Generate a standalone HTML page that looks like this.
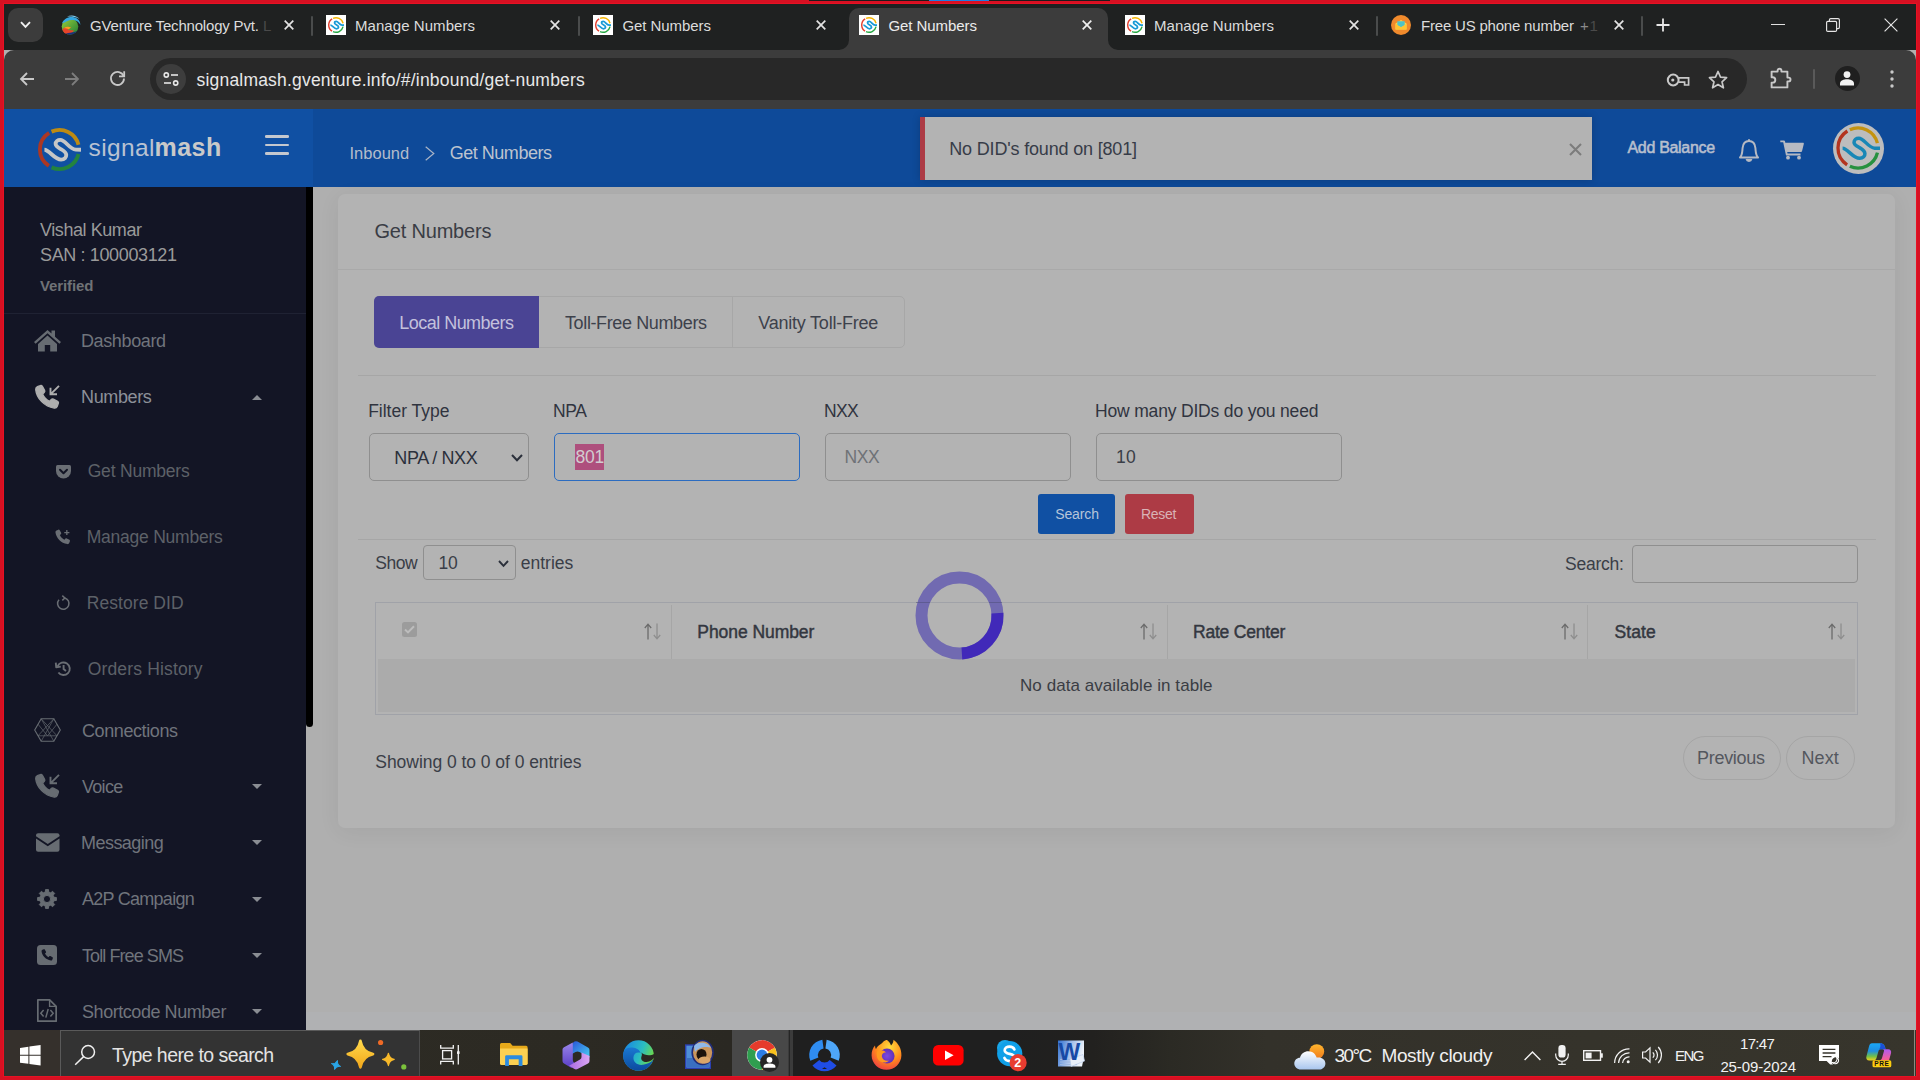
<!DOCTYPE html>
<html lang="en">
<head>
<meta charset="utf-8">
<title>Get Numbers</title>
<style>
*{box-sizing:border-box;margin:0;padding:0}
html,body{width:1920px;height:1080px;overflow:hidden;background:#d71022}
body{font-family:"Liberation Sans",sans-serif;position:relative}
.a{position:absolute}
.t{position:absolute;white-space:pre;line-height:1}
svg{position:absolute;overflow:visible}
#win{position:absolute;left:4px;top:4px;width:1912px;height:1072px;background:#b0b0b0;overflow:hidden;box-shadow:0 0 0 1px #e71123}
#pg{position:absolute;left:-4px;top:-4px;width:1920px;height:1080px}
#tabstrip{left:4px;top:4px;width:1912px;height:46px;background:#1f2121}
#toolbar{left:4px;top:50px;width:1912px;height:59px;background:#3c3c3c;border-radius:10px 10px 0 0}
#pill{left:150px;top:58px;width:1597px;height:42px;background:#282828;border-radius:21px}
#acttab{left:849px;top:7.5px;width:259px;height:42.5px;background:#3c3c3c;border-radius:10px 10px 0 0}
.tsep{position:absolute;top:16px;width:2px;height:20px;background:#4a4c4c;border-radius:1px}
.fav{position:absolute;top:15px;width:20px;height:20px;background:#fff}
#hdrL{left:4px;top:109px;width:309px;height:78px;background:#1050a3}
#hdrR{left:313px;top:109px;width:1603px;height:78px;background:#0e4a99}
#side{left:4px;top:187px;width:302px;height:843px;background:#131525}
#sbar{left:306px;top:187px;width:7px;height:540px;background:#000;border-radius:0 0 4px 4px}
#main{left:306px;top:187px;width:1610px;height:843px;background:#afafaf}
#card{left:338px;top:194px;width:1557px;height:634px;background:#b3b3b3;border-radius:7px;box-shadow:0 4px 22px rgba(0,0,0,.06)}
.hl{position:absolute;height:1px;background:#a6a6a6}
.inp{position:absolute;border:1px solid #8f8f8f;border-radius:5px;background:#b3b3b3}
#task{left:4px;top:1030px;width:1912px;height:46px;background:linear-gradient(90deg,#2e2c25 0,#2c2a23 30%,#2a2822 38%,#262521 41%,#1f1f1f 41.3%,#1f1f1f 52%,#22211f 57%,#2b2a24 61%,#33312a 66%,#37352c 100%)}
</style>
</head>
<body>
<div class="a" style="left:809px;top:0;width:301px;height:1px;background:#1c1c1c"></div><div class="a" style="left:929px;top:0;width:60px;height:1px;background:#1e7fe0"></div>
<div id="win"><div id="pg">
<!-- CHROME -->
<div class="a" id="tabstrip"></div>
<div class="a" id="toolbar"></div>
<div class="a" id="acttab"></div>
<svg style="left:839px;top:40px" width="10" height="10" viewBox="0 0 10 10"><path d="M0,10 A10,10 0 0 0 10,0 V10 Z" fill="#3c3c3c"/></svg><svg style="left:1108px;top:40px" width="10" height="10" viewBox="0 0 10 10"><path d="M10,10 A10,10 0 0 1 0,0 V10 Z" fill="#3c3c3c"/></svg>
<div class="a" id="pill"></div>
<div class="a" style="left:8px;top:8px;width:35px;height:34px;border-radius:10px;background:#3c3c3c"></div><svg style="left:20px;top:21px" width="11" height="8" viewBox="0 0 11 8"><path d="M1,1.2 L5.5,5.8 L10,1.2" fill="none" stroke="#f0f0f0" stroke-width="1.9"/></svg>
<svg style="left:60px;top:14px" width="21" height="22" viewBox="0 0 21 22"><defs><linearGradient id="gv" x1="0" y1="0" x2="1" y2="1"><stop offset="0" stop-color="#9bd03a"/><stop offset="1" stop-color="#1f7d34"/></linearGradient></defs><circle cx="10" cy="12.5" r="8.3" fill="url(#gv)"/><path d="M2,9.5 C4,3.5 12,1 17.5,5 C19.5,6.5 20.5,9 20.3,11 C18.5,6.5 12,4.5 6.5,7.5 C4.5,8.5 3,9 2,9.5 Z" fill="#33a7e0"/><path d="M7,2.6 C11,0.5 16.5,1.2 19.5,5 C16,2.8 11,2.4 7,2.6 Z" fill="#7fd0f5"/><path d="M2.4,15.5 C4.5,13 8,12 11,13.5 L7.5,16 L14,16.5 C12,19.5 7.5,21.5 4.5,19 C3.4,18 2.7,16.8 2.4,15.5 Z" fill="#e8432a"/><path d="M5.5,19.6 C9,21.8 14.5,20.8 17,17 C14,18.5 9,18.8 5.5,19.6 Z" fill="#1c2f7a"/><path d="M4,14.2 C6,12.6 9,12.4 11,13.5 L8.6,15.2 C7,14.4 5.4,14.2 4,14.2 Z" fill="#f6a21e"/></svg><div class="t" style="left:90px;top:18.00px;font-size:15px;color:#dcdcdc;letter-spacing:-0.186px;">GVenture Technology Pvt.</div><div class="t" style="left:263px;top:18.00px;font-size:15px;color:#4a4a4a;">L</div><svg style="left:284px;top:20px" width="10" height="10" viewBox="0 0 10 10"><path d="M0.7,0.7 L9.3,9.3 M9.3,0.7 L0.7,9.3" stroke="#e3e3e3" stroke-width="1.7" fill="none"/></svg><div class="tsep" style="left:311px"></div>
<div class="fav" style="left:326px"></div><svg style="left:328px;top:17px" width="16" height="16" viewBox="0 0 100 100" fill="none"><path d="M25.89,11.41 A45.5,45.5 0 0 0 25.22,88.16" stroke="#e3402f" stroke-width="9"/><path d="M31.49,8.43 A45.5,45.5 0 0 1 94.15,38.99" stroke="#f5b400" stroke-width="9"/><path d="M94.24,60.62 A45.5,45.5 0 0 1 31.49,91.57" stroke="#27a844" stroke-width="9"/><path d="M15,50.6 C26,50.6 38,73.5 53.6,73.5 C62,73.5 66,68 65.7,62.7 C65.4,55 57,51.5 52,48.5 C46,45 41,42 41,37.3 C41,31 46,27.7 51.8,27.7 C64,27.7 72,49 88,50.4 L100,50.6" stroke="#199ad6" stroke-width="11"/></svg><div class="t" style="left:355px;top:18.00px;font-size:15px;color:#dcdcdc;letter-spacing:0.060px;">Manage Numbers</div><svg style="left:550px;top:20px" width="10" height="10" viewBox="0 0 10 10"><path d="M0.7,0.7 L9.3,9.3 M9.3,0.7 L0.7,9.3" stroke="#e3e3e3" stroke-width="1.7" fill="none"/></svg><div class="tsep" style="left:578px"></div>
<div class="fav" style="left:593px"></div><svg style="left:595px;top:17px" width="16" height="16" viewBox="0 0 100 100" fill="none"><path d="M25.89,11.41 A45.5,45.5 0 0 0 25.22,88.16" stroke="#e3402f" stroke-width="9"/><path d="M31.49,8.43 A45.5,45.5 0 0 1 94.15,38.99" stroke="#f5b400" stroke-width="9"/><path d="M94.24,60.62 A45.5,45.5 0 0 1 31.49,91.57" stroke="#27a844" stroke-width="9"/><path d="M15,50.6 C26,50.6 38,73.5 53.6,73.5 C62,73.5 66,68 65.7,62.7 C65.4,55 57,51.5 52,48.5 C46,45 41,42 41,37.3 C41,31 46,27.7 51.8,27.7 C64,27.7 72,49 88,50.4 L100,50.6" stroke="#199ad6" stroke-width="11"/></svg><div class="t" style="left:622.5px;top:18.00px;font-size:15px;color:#dcdcdc;letter-spacing:-0.069px;">Get Numbers</div><svg style="left:816px;top:20px" width="10" height="10" viewBox="0 0 10 10"><path d="M0.7,0.7 L9.3,9.3 M9.3,0.7 L0.7,9.3" stroke="#e3e3e3" stroke-width="1.7" fill="none"/></svg><div class="fav" style="left:859px"></div><svg style="left:861px;top:17px" width="16" height="16" viewBox="0 0 100 100" fill="none"><path d="M25.89,11.41 A45.5,45.5 0 0 0 25.22,88.16" stroke="#e3402f" stroke-width="9"/><path d="M31.49,8.43 A45.5,45.5 0 0 1 94.15,38.99" stroke="#f5b400" stroke-width="9"/><path d="M94.24,60.62 A45.5,45.5 0 0 1 31.49,91.57" stroke="#27a844" stroke-width="9"/><path d="M15,50.6 C26,50.6 38,73.5 53.6,73.5 C62,73.5 66,68 65.7,62.7 C65.4,55 57,51.5 52,48.5 C46,45 41,42 41,37.3 C41,31 46,27.7 51.8,27.7 C64,27.7 72,49 88,50.4 L100,50.6" stroke="#199ad6" stroke-width="11"/></svg><div class="t" style="left:888.5px;top:18.00px;font-size:15px;color:#ececec;letter-spacing:-0.069px;">Get Numbers</div><svg style="left:1082px;top:20px" width="10" height="10" viewBox="0 0 10 10"><path d="M0.7,0.7 L9.3,9.3 M9.3,0.7 L0.7,9.3" stroke="#f0f0f0" stroke-width="1.7" fill="none"/></svg><div class="fav" style="left:1125px"></div><svg style="left:1127px;top:17px" width="16" height="16" viewBox="0 0 100 100" fill="none"><path d="M25.89,11.41 A45.5,45.5 0 0 0 25.22,88.16" stroke="#e3402f" stroke-width="9"/><path d="M31.49,8.43 A45.5,45.5 0 0 1 94.15,38.99" stroke="#f5b400" stroke-width="9"/><path d="M94.24,60.62 A45.5,45.5 0 0 1 31.49,91.57" stroke="#27a844" stroke-width="9"/><path d="M15,50.6 C26,50.6 38,73.5 53.6,73.5 C62,73.5 66,68 65.7,62.7 C65.4,55 57,51.5 52,48.5 C46,45 41,42 41,37.3 C41,31 46,27.7 51.8,27.7 C64,27.7 72,49 88,50.4 L100,50.6" stroke="#199ad6" stroke-width="11"/></svg><div class="t" style="left:1154px;top:18.00px;font-size:15px;color:#dcdcdc;letter-spacing:0.060px;">Manage Numbers</div><svg style="left:1349px;top:20px" width="10" height="10" viewBox="0 0 10 10"><path d="M0.7,0.7 L9.3,9.3 M9.3,0.7 L0.7,9.3" stroke="#e3e3e3" stroke-width="1.7" fill="none"/></svg><div class="tsep" style="left:1376px"></div>
<svg style="left:1391px;top:15px" width="20" height="20" viewBox="0 0 20 20"><circle cx="10" cy="10" r="10" fill="#f08a2c"/><path d="M4.5,8.5 L10,5 L15.5,8.5 V14.5 H4.5 Z" fill="#ffd54a"/><path d="M6.3,6.2 H13.7 V10.5 L10,12.3 L6.3,10.5 Z" fill="#4fc3c7"/><path d="M4.5,8.7 L10,12.3 L15.5,8.7 V14.5 H4.5 Z" fill="#ffc532"/></svg><div class="t" style="left:1421px;top:18.00px;font-size:15px;color:#dcdcdc;letter-spacing:-0.198px;">Free US phone number</div><div class="t" style="left:1580px;top:18.00px;font-size:15px;color:#8a8a8a;">+</div><div class="t" style="left:1589.5px;top:18.00px;font-size:15px;color:#4a4a4a;">1</div><svg style="left:1614px;top:20px" width="10" height="10" viewBox="0 0 10 10"><path d="M0.7,0.7 L9.3,9.3 M9.3,0.7 L0.7,9.3" stroke="#e3e3e3" stroke-width="1.7" fill="none"/></svg><div class="tsep" style="left:1641px"></div>
<svg style="left:1656px;top:18px" width="14" height="14" viewBox="0 0 14 14"><path d="M7,0.5 V13.5 M0.5,7 H13.5" stroke="#e6e6e6" stroke-width="1.8"/></svg><div class="a" style="left:1771px;top:24px;width:13.5px;height:1.2px;background:#e0e0e0"></div><svg style="left:1826px;top:18px" width="14" height="14" viewBox="0 0 14 14" fill="none" stroke="#e6e6e6" stroke-width="1.15"><rect x="0.6" y="3.4" width="10" height="10" rx="1.2"/><path d="M3.4,3.2 V2 Q3.4,0.6 4.8,0.6 H12 Q13.4,0.6 13.4,2 V9.2 Q13.4,10.6 12,10.6 H10.8"/></svg><svg style="left:1884px;top:18px" width="14" height="14" viewBox="0 0 14 14"><path d="M0.6,0.6 L13.4,13.4 M13.4,0.6 L0.6,13.4" stroke="#e6e6e6" stroke-width="1.15"/></svg>
<svg style="left:19px;top:71px" width="16" height="16" viewBox="0 0 16 16" fill="none" stroke="#c9c9c9" stroke-width="1.8"><path d="M15,8 H2 M8,2 L2,8 L8,14"/></svg><svg style="left:64px;top:71px" width="16" height="16" viewBox="0 0 16 16" fill="none" stroke="#7d7d7d" stroke-width="1.8"><path d="M1,8 H14 M8,2 L14,8 L8,14"/></svg><svg style="left:109px;top:70px" width="17" height="17" viewBox="0 0 17 17" fill="none" stroke="#c9c9c9" stroke-width="1.8"><path d="M14.6,6.2 A6.5,6.5 0 1 0 15,8.5"/><path d="M15.2,1.2 V6.4 H10" /></svg><div class="a" style="left:156px;top:64px;width:30px;height:30px;border-radius:15px;background:#3d3d3d"></div><svg style="left:163px;top:72px" width="16" height="14" viewBox="0 0 16 14" fill="none" stroke="#e6e6e6" stroke-width="1.6"><circle cx="3.3" cy="3" r="2.1"/><path d="M8,3 H15"/><circle cx="12.7" cy="11" r="2.1"/><path d="M1,11 H8"/></svg><div class="t" style="left:196.5px;top:72.25px;font-size:17.5px;color:#e8e8e8;letter-spacing:0.197px;">signalmash.gventure.info/#/inbound/get-numbers</div><svg style="left:1665.5px;top:72.6px" width="25" height="14" viewBox="0 0 25 14" fill="none" stroke="#c9c9c9" stroke-width="2"><circle cx="7.2" cy="7" r="5.4"/><circle cx="6.8" cy="7" r="1.6" fill="#c9c9c9" stroke="none"/><path d="M12.4,4.9 H22.6 V12 H18.6 V9.1 H12.4" stroke-width="1.7"/></svg><svg style="left:1707.6px;top:69.6px" width="20" height="19" viewBox="0 0 20 19" fill="none" stroke="#c9c9c9" stroke-width="1.7" stroke-linejoin="round"><path d="M10,1.5 L12.5,7.2 L18.6,7.7 L14,11.8 L15.4,17.8 L10,14.6 L4.6,17.8 L6,11.8 L1.4,7.7 L7.5,7.2 Z"/></svg><svg style="left:1770.3px;top:67.4px" width="23" height="22" viewBox="0 0 23 22" fill="none" stroke="#c9c9c9" stroke-width="1.9" stroke-linejoin="round"><path d="M1.6,4.6 H7.6 V3.6 A1.9,1.9 0 0 1 11.4,3.6 V4.6 H17.4 V10.6 H18.6 A1.9,1.9 0 0 1 18.6,14.4 H17.4 V20.4 H1.6 V15.6 H2.6 A2.5,2.5 0 0 0 2.6,10.2 H1.6 Z"/></svg><div class="a" style="left:1813px;top:69px;width:2px;height:20px;background:#5a5a5a;border-radius:1px"></div><div class="a" style="left:1834.5px;top:66px;width:25px;height:25px;border-radius:13px;background:#1f1f1f"></div><svg style="left:1839px;top:70px" width="16" height="16" viewBox="0 0 16 16" fill="#f2f2f2"><circle cx="8" cy="4.6" r="3.4"/><path d="M1,15.5 V13.5 C1,10.5 5,9.3 8,9.3 C11,9.3 15,10.5 15,13.5 V15.5 Z"/></svg><svg style="left:1890px;top:70px" width="4" height="18" viewBox="0 0 4 18" fill="#c9c9c9"><circle cx="2" cy="2" r="1.7"/><circle cx="2" cy="9" r="1.7"/><circle cx="2" cy="16" r="1.7"/></svg>
<!-- APP HEADER -->
<div class="a" id="hdrL"></div>
<div class="a" id="hdrR"></div>
<svg style="left:37.7px;top:128.2px" width="43" height="43" viewBox="0 0 100 100" fill="none"><path d="M25.89,11.41 A45.5,45.5 0 0 0 25.22,88.16" stroke="#ac3723" stroke-width="9"/><path d="M31.49,8.43 A45.5,45.5 0 0 1 94.15,38.99" stroke="#bd8b14" stroke-width="9"/><path d="M94.24,60.62 A45.5,45.5 0 0 1 31.49,91.57" stroke="#23833f" stroke-width="9"/><path d="M15,50.6 C26,50.6 38,73.5 53.6,73.5 C62,73.5 66,68 65.7,62.7 C65.4,55 57,51.5 52,48.5 C46,45 41,42 41,37.3 C41,31 46,27.7 51.8,27.7 C64,27.7 72,49 88,50.4 L100,50.6" stroke="#c6c6c6" stroke-width="9"/></svg><div class="t" style="left:88.5px;top:136.25px;font-size:24.5px;color:#b9c2d2;letter-spacing:0.386px;">signal</div><div class="t" style="left:154.5px;top:134.50px;font-size:25px;color:#c9c9c9;font-weight:700;letter-spacing:0.488px;">mash</div><div class="a" style="left:264.5px;top:135.3px;width:24.5px;height:2.6px;background:#c4c8cf;border-radius:1.3px"></div><div class="a" style="left:264.5px;top:143.8px;width:24.5px;height:2.6px;background:#c4c8cf;border-radius:1.3px"></div><div class="a" style="left:264.5px;top:152.3px;width:24.5px;height:2.6px;background:#c4c8cf;border-radius:1.3px"></div>
<div class="t" style="left:349.5px;top:144.75px;font-size:16.5px;color:#b3bccb;letter-spacing:0.006px;">Inbound</div><svg style="left:425px;top:146px" width="10" height="15" viewBox="0 0 10 15"><path d="M0.7,0.7 L8.8,7.5 L0.7,14.3" fill="none" stroke="#a9b4c6" stroke-width="1.2"/></svg><div class="t" style="left:449.7px;top:144.00px;font-size:18px;color:#bcc3cf;letter-spacing:-0.473px;">Get Numbers</div><div class="a" style="left:920px;top:117px;width:672px;height:63px;background:#b3b3b3;border-left:5px solid #ad3b45;box-shadow:0 0 8px rgba(0,0,0,.18)"></div><div class="t" style="left:949.3px;top:140.00px;font-size:18px;color:#373c48;letter-spacing:-0.175px;">No DID's found on [801]</div><svg style="left:1569px;top:143px" width="13" height="13" viewBox="0 0 13 13"><path d="M1,1 L12,12 M12,1 L1,12" stroke="#7c7c7c" stroke-width="2.1"/></svg>
<div class="t" style="left:1627.5px;top:139.50px;font-size:16px;color:#b7bfce;letter-spacing:-0.314px;-webkit-text-stroke:0.55px #b7bfce;">Add Balance</div><svg style="left:1737px;top:138px" width="24" height="25" viewBox="0 0 24 25" fill="none" stroke="#b6bac3" stroke-width="2"><path d="M3,19.5 C5.5,17 5.2,13.5 5.6,10 C6,5.5 8.5,3 12,3 C15.5,3 18,5.5 18.4,10 C18.8,13.5 18.5,17 21,19.5 Z" stroke-linejoin="round"/><path d="M12,3 V1.2"/><path d="M9.5,21 A2.6,2.6 0 0 0 14.5,21" fill="#b6bac3"/></svg><svg style="left:1780px;top:140px" width="24" height="20" viewBox="0 0 24 20" fill="#b6bac3"><path d="M0.3,0.5 H4 C4.5,0.5 4.9,0.8 5,1.3 L5.3,2.8 H23 C23.6,2.8 24,3.3 23.8,3.9 L22,11.3 C21.9,11.8 21.5,12.1 21,12.1 H7.2 L7.5,13.6 H20.5 V15.4 H6 L3.2,2.2 H0.3 Z"/><circle cx="8" cy="17.7" r="1.9"/><circle cx="19" cy="17.7" r="1.9"/></svg><div class="a" style="left:1833px;top:123px;width:50.5px;height:50.5px;border-radius:26px;background:#bdbdbd"></div><svg style="left:1836.3px;top:126px" width="44" height="44" viewBox="0 0 100 100" fill="none"><path d="M25.89,11.41 A45.5,45.5 0 0 0 25.22,88.16" stroke="#b3341f" stroke-width="7.5"/><path d="M31.49,8.43 A45.5,45.5 0 0 1 94.15,38.99" stroke="#c4930f" stroke-width="7.5"/><path d="M94.24,60.62 A45.5,45.5 0 0 1 31.49,91.57" stroke="#27913f" stroke-width="7.5"/><path d="M15,50.6 C26,50.6 38,73.5 53.6,73.5 C62,73.5 66,68 65.7,62.7 C65.4,55 57,51.5 52,48.5 C46,45 41,42 41,37.3 C41,31 46,27.7 51.8,27.7 C64,27.7 72,49 88,50.4 L100,50.6" stroke="#1887b6" stroke-width="8"/></svg>
<!-- SIDEBAR -->
<div class="a" id="main"></div>
<div class="a" style="left:306px;top:1012px;width:1610px;height:18px;background:#b0b1b3"></div>
<div class="a" id="side"></div>
<div class="a" id="sbar"></div>
<div class="t" style="left:40px;top:221.00px;font-size:18px;color:#9a9a9a;letter-spacing:-0.429px;">Vishal Kumar</div><div class="t" style="left:40px;top:246.00px;font-size:18px;color:#9a9a9a;letter-spacing:-0.364px;">SAN : 100003121</div><div class="t" style="left:40px;top:278.00px;font-size:15px;color:#6f7276;font-weight:700;letter-spacing:-0.118px;">Verified</div><div class="a" style="left:4px;top:313px;width:302px;height:1px;background:#1f2233"></div>
<svg style="left:34px;top:329.5px" width="27" height="21.5" viewBox="0 0 27 21.5" fill="#676c72"><path d="M13.5,0 L17.5,3.6 V0.6 H21 V6.7 L27,12 L25.4,13.8 L13.5,3.3 L1.6,13.8 L0,12 Z"/><path d="M13.5,5.6 L23,14 V21.5 H16.2 V15 H10.8 V21.5 H4 V14 Z"/></svg><div class="t" style="left:81px;top:332.00px;font-size:18px;color:#70747c;letter-spacing:-0.381px;">Dashboard</div><svg style="left:35px;top:384.5px" width="25" height="24" viewBox="0 0 25 24"><path d="M5.2,0.6 C6,0.2 6.9,0.5 7.4,1.3 L9.6,5.3 C10,6.1 9.8,7 9.2,7.6 L7.6,9 C8.8,11.9 11.6,14.8 14.6,16.3 L16.1,14.6 C16.7,14 17.6,13.8 18.4,14.2 L22.6,16.4 C23.4,16.9 23.7,17.8 23.3,18.6 L22.2,21.4 C21.7,22.6 20.5,23.3 19.2,23.1 C9.5,21.6 1.6,13.5 0.7,4.6 C0.6,3.4 1.3,2.2 2.4,1.7 Z" fill="#aeaeae" stroke="#aeaeae" stroke-width="1.3" stroke-linejoin="round"/><path d="M24,0.8 L16,8.8 M15.5,2.8 V9.3 H22" fill="none" stroke="#aeaeae" stroke-width="1.9"/></svg><div class="t" style="left:81px;top:388.00px;font-size:18px;color:#8c9099;letter-spacing:-0.370px;">Numbers</div><svg style="left:252px;top:394.5px" width="10" height="5" viewBox="0 0 10 5"><path d="M0,5 L5,0 L10,5 Z" fill="#8a8d93"/></svg>
<svg style="left:55.5px;top:464.5px" width="15" height="13.5" viewBox="0 0 15 13.5"><path d="M1.5,0 H13.5 Q15,0 15,1.5 V6 A7.5,7.5 0 0 1 0,6 V1.5 Q0,0 1.5,0 Z" fill="#6a6e74"/><path d="M4,4.8 L7.5,8.2 L11,4.8" fill="none" stroke="#131525" stroke-width="2" stroke-linecap="round" stroke-linejoin="round"/></svg><div class="t" style="left:87.7px;top:463.25px;font-size:17.5px;color:#5d6168;letter-spacing:-0.201px;">Get Numbers</div><svg style="left:55px;top:528.5px" width="16" height="16" viewBox="0 0 25 24"><path d="M5.2,0.6 C6,0.2 6.9,0.5 7.4,1.3 L9.6,5.3 C10,6.1 9.8,7 9.2,7.6 L7.6,9 C8.8,11.9 11.6,14.8 14.6,16.3 L16.1,14.6 C16.7,14 17.6,13.8 18.4,14.2 L22.6,16.4 C23.4,16.9 23.7,17.8 23.3,18.6 L22.2,21.4 C21.7,22.6 20.5,23.3 19.2,23.1 C9.5,21.6 1.6,13.5 0.7,4.6 C0.6,3.4 1.3,2.2 2.4,1.7 Z" fill="#6a6e74"/><path d="M18.5,1 V9 M14.5,5 H22.5" stroke="#6a6e74" stroke-width="2" fill="none"/></svg><div class="t" style="left:86.7px;top:529.25px;font-size:17.5px;color:#5d6168;letter-spacing:-0.234px;">Manage Numbers</div><svg style="left:56px;top:595px" width="14" height="15" viewBox="0 0 14 15" fill="none" stroke="#6a6e74" stroke-width="1.5"><path d="M8.6,3 A5.7,5.7 0 1 1 3,4.8"/><path d="M6.3,0.6 L8.8,3 L6.3,5.4" /></svg><div class="t" style="left:86.7px;top:595.25px;font-size:17.5px;color:#5d6168;letter-spacing:0.066px;">Restore DID</div><svg style="left:55px;top:661px" width="16" height="15" viewBox="0 0 16 15" fill="none" stroke="#6a6e74" stroke-width="1.9"><path d="M2.7,5.2 A6.3,6.3 0 1 1 3.4,11.5"/><path d="M0.8,1.6 L1.2,6.2 L5.8,5.6" stroke-linejoin="round"/><path d="M8.6,4 V8 L11,10"/></svg><div class="t" style="left:87.7px;top:661.25px;font-size:17.5px;color:#5d6168;letter-spacing:0.158px;">Orders History</div>
<svg style="left:34px;top:718px" width="27" height="24" viewBox="0 0 27 24" fill="none" stroke="#676c72" stroke-width="0.85"><path d="M7.2,0.8 H19.8 L26.3,12 L19.8,23.2 H7.2 L0.7,12 Z" stroke-width="1.1"/><path d="M7.2,0.8 L19.8,23.2 M19.8,0.8 L7.2,23.2 M4,17.8 H23 M7.2,0.8 L23,17.8 M19.8,0.8 L4,17.8 M4,6.2 L13.5,17.8 L23,6.2" stroke-opacity=".8"/></svg><div class="t" style="left:82px;top:722.00px;font-size:18px;color:#70747c;letter-spacing:-0.406px;">Connections</div><svg style="left:35px;top:774px" width="25" height="24" viewBox="0 0 25 24"><path d="M5.2,0.6 C6,0.2 6.9,0.5 7.4,1.3 L9.6,5.3 C10,6.1 9.8,7 9.2,7.6 L7.6,9 C8.8,11.9 11.6,14.8 14.6,16.3 L16.1,14.6 C16.7,14 17.6,13.8 18.4,14.2 L22.6,16.4 C23.4,16.9 23.7,17.8 23.3,18.6 L22.2,21.4 C21.7,22.6 20.5,23.3 19.2,23.1 C9.5,21.6 1.6,13.5 0.7,4.6 C0.6,3.4 1.3,2.2 2.4,1.7 Z" fill="#676c72" stroke="#676c72" stroke-width="1.3" stroke-linejoin="round"/><path d="M24,0.8 L16,8.8 M15.5,2.8 V9.3 H22" fill="none" stroke="#676c72" stroke-width="1.9"/></svg><div class="t" style="left:82px;top:778.00px;font-size:18px;color:#70747c;letter-spacing:-0.706px;">Voice</div><svg style="left:252px;top:784px" width="10" height="5" viewBox="0 0 10 5"><path d="M0,0 L10,0 L5,5 Z" fill="#8a8d93"/></svg><svg style="left:35.5px;top:833px" width="23.5" height="19" viewBox="0 0 24 19" fill="#676c72"><path d="M2.2,0 H21.8 Q24,0 24,2.2 V3 L12,11 L0,3 V2.2 Q0,0 2.2,0 Z"/><path d="M0,5.3 L12,13.3 L24,5.3 V16.8 Q24,19 21.8,19 H2.2 Q0,19 0,16.8 Z"/></svg><div class="t" style="left:81px;top:834.00px;font-size:18px;color:#70747c;letter-spacing:-0.542px;">Messaging</div><svg style="left:252px;top:840px" width="10" height="5" viewBox="0 0 10 5"><path d="M0,0 L10,0 L5,5 Z" fill="#8a8d93"/></svg><svg style="left:36px;top:888px" width="22" height="22" viewBox="0 0 22 22"><path d="M18.00,9.32 L20.38,9.51 L20.38,12.49 L18.00,12.68 L17.14,14.76 L18.69,16.58 L16.58,18.69 L14.76,17.14 L12.68,18.00 L12.49,20.38 L9.51,20.38 L9.32,18.00 L7.24,17.14 L5.42,18.69 L3.31,16.58 L4.86,14.76 L4.00,12.68 L1.62,12.49 L1.62,9.51 L4.00,9.32 L4.86,7.24 L3.31,5.42 L5.42,3.31 L7.24,4.86 L9.32,4.00 L9.51,1.62 L12.49,1.62 L12.68,4.00 L14.76,4.86 L16.58,3.31 L18.69,5.42 L17.14,7.24 Z M7.40,11.00 a3.6,3.6 0 1 0 7.2,0 a3.6,3.6 0 1 0 -7.2,0 Z" fill="#676c72" fill-rule="evenodd" stroke="#676c72" stroke-width="1" stroke-linejoin="round"/></svg><div class="t" style="left:82px;top:890.00px;font-size:18px;color:#70747c;letter-spacing:-0.733px;">A2P Campaign</div><svg style="left:252px;top:896.5px" width="10" height="5" viewBox="0 0 10 5"><path d="M0,0 L10,0 L5,5 Z" fill="#8a8d93"/></svg><svg style="left:37px;top:945px" width="20" height="20" viewBox="0 0 20 20"><rect width="20" height="20" rx="3.5" fill="#676c72"/><g transform="translate(4.2,4) scale(0.5)"><path d="M5.2,0.6 C6,0.2 6.9,0.5 7.4,1.3 L9.6,5.3 C10,6.1 9.8,7 9.2,7.6 L7.6,9 C8.8,11.9 11.6,14.8 14.6,16.3 L16.1,14.6 C16.7,14 17.6,13.8 18.4,14.2 L22.6,16.4 C23.4,16.9 23.7,17.8 23.3,18.6 L22.2,21.4 C21.7,22.6 20.5,23.3 19.2,23.1 C9.5,21.6 1.6,13.5 0.7,4.6 C0.6,3.4 1.3,2.2 2.4,1.7 Z" fill="#131525"/></g></svg><div class="t" style="left:82px;top:947.00px;font-size:18px;color:#70747c;letter-spacing:-0.918px;">Toll Free SMS</div><svg style="left:252px;top:953px" width="10" height="5" viewBox="0 0 10 5"><path d="M0,0 L10,0 L5,5 Z" fill="#8a8d93"/></svg><svg style="left:37.2px;top:999.2px" width="20" height="23" viewBox="0 0 20 23" fill="none" stroke="#676c72" stroke-width="1.7"><path d="M0.85,0.85 H12.6 L19.15,7.4 V22.15 H0.85 Z" stroke-linejoin="round"/><path d="M12.6,0.85 V7.4 H19.15" stroke-width="1.4"/><path d="M6.6,11 L3.8,14.3 L6.6,17.6 M13.4,11 L16.2,14.3 L13.4,17.6 M11.2,10 L8.8,18.6" stroke-width="1.5"/></svg><div class="t" style="left:82px;top:1003.00px;font-size:18px;color:#70747c;letter-spacing:-0.445px;">Shortcode Number</div><svg style="left:252px;top:1009px" width="10" height="5" viewBox="0 0 10 5"><path d="M0,0 L10,0 L5,5 Z" fill="#8a8d93"/></svg>
<!-- MAIN CARD -->
<div class="a" id="card"></div>
<div class="t" style="left:374.5px;top:221.00px;font-size:20px;color:#3a3d45;letter-spacing:-0.203px;">Get Numbers</div><div class="hl" style="left:338px;top:268.5px;width:1557px;background:#a9a9a9"></div>
<div class="a" style="left:374px;top:296px;width:531px;height:52px;border:1px solid #a7a7a7;border-radius:5px"></div><div class="a" style="left:732px;top:297px;width:1px;height:50px;background:#a7a7a7"></div><div class="a" style="left:374px;top:296px;width:165px;height:52px;background:#4a4494;border-radius:5px 0 0 5px"></div><div class="t" style="left:399.3px;top:314.00px;font-size:18px;color:#c3c1dc;letter-spacing:-0.529px;">Local Numbers</div><div class="t" style="left:565px;top:314.00px;font-size:18px;color:#3d414b;letter-spacing:-0.377px;">Toll-Free Numbers</div><div class="t" style="left:758.3px;top:314.00px;font-size:18px;color:#3d414b;letter-spacing:-0.226px;">Vanity Toll-Free</div><div class="hl" style="left:358px;top:375px;width:1518px"></div>
<div class="t" style="left:368.2px;top:403.25px;font-size:17.5px;color:#30343f;letter-spacing:-0.016px;">Filter Type</div><div class="t" style="left:553px;top:403.25px;font-size:17.5px;color:#30343f;letter-spacing:-0.356px;">NPA</div><div class="t" style="left:824px;top:403.25px;font-size:17.5px;color:#30343f;letter-spacing:-0.655px;">NXX</div><div class="t" style="left:1095px;top:403.25px;font-size:17.5px;color:#30343f;letter-spacing:-0.174px;">How many DIDs do you need</div><div class="inp" style="left:369px;top:433px;width:160px;height:48px"></div><div class="t" style="left:394.3px;top:449.00px;font-size:18px;color:#2b303b;letter-spacing:-0.410px;">NPA / NXX</div><svg style="left:511px;top:453.5px" width="12" height="8" viewBox="0 0 12 8"><path d="M1,1 L6,6.3 L11,1" fill="none" stroke="#2b303b" stroke-width="2"/></svg><div class="inp" style="left:554px;top:433px;width:246px;height:48px;border:1.6px solid #2c6cc0"></div><div class="a" style="left:575px;top:444px;width:29.3px;height:25.7px;background:#ae4f7d"></div><div class="t" style="left:575.6px;top:449.25px;font-size:17.5px;color:#d2ccd0;letter-spacing:-0.333px;">801</div><div class="inp" style="left:825px;top:433px;width:246px;height:48px"></div><div class="t" style="left:844.5px;top:449.25px;font-size:17.5px;color:#6f7277;letter-spacing:-0.405px;">NXX</div><div class="inp" style="left:1096px;top:433px;width:246px;height:48px"></div><div class="t" style="left:1116px;top:449.25px;font-size:17.5px;color:#3a3e47;letter-spacing:0.267px;">10</div>
<div class="a" style="left:1038px;top:494px;width:77px;height:40px;background:#1050a3;border-radius:3px"></div><div class="t" style="left:1055.2px;top:507.00px;font-size:14px;color:#b6c5da;letter-spacing:-0.114px;">Search</div><div class="a" style="left:1125px;top:494px;width:69px;height:40px;background:#ad3b45;border-radius:3px"></div><div class="t" style="left:1141px;top:507.00px;font-size:14px;color:#d9b3b6;letter-spacing:-0.271px;">Reset</div><div class="hl" style="left:358px;top:539px;width:1518px"></div>
<div class="t" style="left:375.3px;top:555.25px;font-size:17.5px;color:#3a3e47;letter-spacing:-0.479px;">Show</div><div class="inp" style="left:422.5px;top:545px;width:93px;height:35px;border-radius:4px"></div><div class="t" style="left:438.5px;top:555.25px;font-size:17.5px;color:#3a3e47;letter-spacing:-0.233px;">10</div><svg style="left:498px;top:560px" width="11" height="8" viewBox="0 0 11 8"><path d="M1,1 L5.5,5.8 L10,1" fill="none" stroke="#2b303b" stroke-width="1.9"/></svg><div class="t" style="left:520.8px;top:555.25px;font-size:17.5px;color:#3a3e47;">entries</div><div class="t" style="left:1565px;top:556.25px;font-size:17.5px;color:#3a3e47;letter-spacing:-0.241px;">Search:</div><div class="inp" style="left:1632px;top:545px;width:226px;height:38px;border-radius:4px"></div>
<div class="a" style="left:375px;top:602px;width:1483px;height:112.5px;border:1px solid #a0a2a8"></div><div class="a" style="left:378px;top:659px;width:1477px;height:52.5px;background:#ababab"></div><div class="a" style="left:671px;top:605px;width:1px;height:54px;background:#a6a6a6"></div><div class="a" style="left:1167px;top:605px;width:1px;height:54px;background:#a6a6a6"></div><div class="a" style="left:1587px;top:605px;width:1px;height:54px;background:#a6a6a6"></div><div class="a" style="left:401.5px;top:621.5px;width:15.5px;height:15.5px;background:#9c9c9c;border-radius:2.5px"></div><svg style="left:404px;top:625px" width="11" height="9" viewBox="0 0 11 9"><path d="M1,4.6 L4,7.4 L10,1.2" fill="none" stroke="#bdbdbd" stroke-width="2"/></svg><svg style="left:644px;top:622.5px" width="17" height="17" viewBox="0 0 17 17" fill="none" stroke-width="1.3"><path d="M4,16.5 V1.5 M0.8,5 L4,1.2 L7.2,5" stroke="#6b6b6b"/><path d="M13,0.5 V15.5 M9.8,12 L13,15.8 L16.2,12" stroke="#8e8e8e"/></svg><svg style="left:1140px;top:622.5px" width="17" height="17" viewBox="0 0 17 17" fill="none" stroke-width="1.3"><path d="M4,16.5 V1.5 M0.8,5 L4,1.2 L7.2,5" stroke="#6b6b6b"/><path d="M13,0.5 V15.5 M9.8,12 L13,15.8 L16.2,12" stroke="#8e8e8e"/></svg><svg style="left:1560.5px;top:622.5px" width="17" height="17" viewBox="0 0 17 17" fill="none" stroke-width="1.3"><path d="M4,16.5 V1.5 M0.8,5 L4,1.2 L7.2,5" stroke="#6b6b6b"/><path d="M13,0.5 V15.5 M9.8,12 L13,15.8 L16.2,12" stroke="#8e8e8e"/></svg><svg style="left:1828px;top:622.5px" width="17" height="17" viewBox="0 0 17 17" fill="none" stroke-width="1.3"><path d="M4,16.5 V1.5 M0.8,5 L4,1.2 L7.2,5" stroke="#6b6b6b"/><path d="M13,0.5 V15.5 M9.8,12 L13,15.8 L16.2,12" stroke="#8e8e8e"/></svg><div class="t" style="left:697.3px;top:624.25px;font-size:17.5px;color:#333740;letter-spacing:-0.062px;-webkit-text-stroke:0.45px #333740;">Phone Number</div><div class="t" style="left:1193px;top:624.25px;font-size:17.5px;color:#333740;letter-spacing:-0.213px;-webkit-text-stroke:0.45px #333740;">Rate Center</div><div class="t" style="left:1614.6px;top:624.25px;font-size:17.5px;color:#333740;letter-spacing:0.068px;-webkit-text-stroke:0.45px #333740;">State</div><div class="t" style="left:1020px;top:677.00px;font-size:17px;color:#3a3d44;letter-spacing:0.062px;">No data available in table</div>
<div class="t" style="left:375.3px;top:754.25px;font-size:17.5px;color:#3a3e47;letter-spacing:-0.041px;">Showing 0 to 0 of 0 entries</div><div class="a" style="left:1682.5px;top:736px;width:98px;height:44px;border:1px solid #a5a5a5;border-radius:22px"></div><div class="t" style="left:1697px;top:749.00px;font-size:18px;color:#54575e;letter-spacing:-0.290px;">Previous</div><div class="a" style="left:1786px;top:736px;width:69px;height:44px;border:1px solid #a5a5a5;border-radius:22px"></div><div class="t" style="left:1801.5px;top:749.00px;font-size:18px;color:#54575e;letter-spacing:0.097px;">Next</div><svg style="left:914.9px;top:571.2px" width="89" height="89" viewBox="0 0 89 89" fill="none" stroke-width="12"><circle cx="44.5" cy="44.5" r="38" stroke="#716ab1"/><path d="M82.43,42.11 A38,38 0 0 1 46.89,82.43" stroke="#4129b9"/></svg>
<div class="a" style="left:916px;top:602px;width:14px;height:1px;background:rgba(70,74,110,.45)"></div><div class="a" style="left:989px;top:602px;width:13px;height:1px;background:rgba(70,74,110,.45)"></div>
<!-- TASKBAR -->
<div class="a" id="task"></div>
<div class="a" style="left:4px;top:1030px;width:56px;height:46px;background:#35302c"></div><svg style="left:19.7px;top:1044.7px" width="20.6" height="20.6" viewBox="0 0 20.6 20.6" fill="#fff"><path d="M0,2.9 L8.4,1.75 V9.8 H0 Z M9.4,1.6 L20.6,0 V9.8 H9.4 Z M0,10.8 H8.4 V18.85 L0,17.7 Z M9.4,10.8 H20.6 V20.6 L9.4,19 Z"/></svg><div class="a" style="left:60px;top:1030px;width:359.5px;height:46px;background:#333333;border:1px solid #5a5a5a;border-right:1px solid #4c4c4c;border-bottom:none"></div><svg style="left:74px;top:1044px" width="22" height="22" viewBox="0 0 22 22" fill="none" stroke="#f0f0f0" stroke-width="1.5"><circle cx="14.1" cy="8" r="6.4"/><path d="M9.6,12.6 L1.2,20.8"/></svg><div class="t" style="left:112px;top:1046.25px;font-size:19.5px;color:#e4e4e4;letter-spacing:-0.567px;">Type here to search</div><svg style="left:328px;top:1034px" width="84" height="40" viewBox="328 1034 84 40"><defs><linearGradient id="gs" x1="0" y1="0" x2="0" y2="1"><stop offset="0" stop-color="#ffd84a"/><stop offset="1" stop-color="#f2a81c"/></linearGradient></defs><path d="M360.4,1040.9 Q362.416,1051.99 373,1054.1 Q362.416,1056.21 360.4,1067.3 Q358.384,1056.21 347.8,1054.1 Q358.384,1051.99 360.4,1040.9 Z" fill="url(#gs)" stroke="url(#gs)" stroke-width="2.772" stroke-linejoin="round"/><path d="M388.4,1053.3 Q389.328,1058.42 394.2,1059.4 Q389.328,1060.38 388.4,1065.5 Q387.472,1060.38 382.6,1059.4 Q387.472,1058.42 388.4,1053.3 Z" fill="#f7b92a" stroke="#f7b92a" stroke-width="1.276" stroke-linejoin="round"/><g transform="rotate(18 336 1065)"><path d="M336,1060.4 Q336.736,1064.26 340.6,1065 Q336.736,1065.74 336,1069.6 Q335.264,1065.74 331.4,1065 Q335.264,1064.26 336,1060.4 Z" fill="#2aa6e8" stroke="#2aa6e8" stroke-width="1.012" stroke-linejoin="round"/></g><circle cx="380.6" cy="1042.5" r="2.6" fill="#ef6a26"/><circle cx="403.8" cy="1066.9" r="2.6" fill="#7cc23c"/></svg>
<svg style="left:440px;top:1044.7px" width="20" height="19.5" viewBox="0 0 20 19.5" fill="none" stroke="#f2f2f2" stroke-width="1.3"><path d="M0.7,0 V3.2 H13.3 V0 M0.7,19.5 V16.3 H13.3 V19.5"/><rect x="2.6" y="5.6" width="9" height="8.3"/><path d="M18.3,0 V19.5"/><rect x="17" y="6.3" width="2.6" height="2.6" fill="#f2f2f2" stroke="none"/></svg><svg style="left:499.8px;top:1042.8px" width="27.6" height="23" viewBox="0 0 28.5 23" preserveAspectRatio="none"><path d="M0,1.5 Q0,0 1.5,0 H10.5 L13,2.8 H27 Q28.5,2.8 28.5,4.3 V21 H0 Z" fill="#e6a91a"/><path d="M0,5.5 H28.5 V20.5 Q28.5,22 27,22 H1.5 Q0,22 0,20.5 Z" fill="#fbd052"/><path d="M5.3,23 V13.6 Q5.3,12.2 6.7,12.2 H21.8 Q23.2,12.2 23.2,13.6 V23 H19.3 V16.3 H9.2 V23 Z" fill="#2b8be0"/></svg><svg style="left:562px;top:1040.5px" width="28" height="28.5" viewBox="0 0 28 28.5"><defs><linearGradient id="m1" x1="0" y1="0" x2="1" y2="1"><stop offset="0" stop-color="#2a55d6"/><stop offset="1" stop-color="#46cdf2"/></linearGradient><linearGradient id="m2" x1="0" y1="0" x2="0" y2="1"><stop offset="0" stop-color="#9a86ea"/><stop offset="1" stop-color="#5a3ec6"/></linearGradient><linearGradient id="m3" x1="0" y1="0" x2="1" y2="0"><stop offset="0" stop-color="#a96ae0"/><stop offset="1" stop-color="#dba6f4"/></linearGradient></defs><path d="M12.5,0.6 Q14,-0.2 15.5,0.6 L26,6.5 Q27.5,7.4 27.5,9 V16.5 L17.5,11 Q15.5,10 13.5,11 L10,13 V4.5 Q10,2.5 11.5,1.3 Z" fill="url(#m1)"/><path d="M10.8,1.6 V19 Q10.8,21 12.5,22 L9.5,27 L2,22.5 Q0.5,21.6 0.5,20 V8.5 Q0.5,7 2,6.2 Z" fill="url(#m2)"/><path d="M27.5,15 V20 Q27.5,21.6 26,22.4 L15.5,28 Q14,28.8 12.5,28 L7,24.8 L18,18.6 Q19.5,17.7 19.5,16 V11.5 Z" fill="url(#m3)"/></svg><svg style="left:622.5px;top:1039.5px" width="31" height="31" viewBox="0 0 31 31"><defs><linearGradient id="e1" x1="0.1" y1="0.2" x2="1" y2="0.55"><stop offset="0" stop-color="#1b8fe0"/><stop offset="0.55" stop-color="#2bbec0"/><stop offset="1" stop-color="#74dc3e"/></linearGradient><linearGradient id="e2" x1="0" y1="0" x2="0" y2="1"><stop offset="0" stop-color="#1a78d2"/><stop offset="1" stop-color="#0c4a9e"/></linearGradient></defs><circle cx="15.5" cy="15.5" r="15.3" fill="url(#e1)"/><path d="M1.2,10.5 C2.5,8.5 6,7.2 9.5,7.6 C13.5,8 16.8,10.2 17.6,13 C14,11.6 10.6,13.6 10.4,17.6 C10.2,22.4 14.6,25.6 20,24.8 C24,24.2 28,22.5 30.4,19.3 C28.8,26 22.8,30.8 15.5,30.8 C7,30.8 0.2,24 0.2,15.5 C0.2,13.7 0.6,12 1.2,10.5 Z" fill="url(#e2)"/><path d="M18.4,12.6 C19.6,14.6 18.4,16 18.2,17.8 C18,20.4 20.4,22.2 23.6,22 C27,21.8 29.8,20 31.4,17 L31.4,13.8 C27,16.4 21.4,15.4 18.4,12.6 Z" fill="#2a2822"/></svg><svg style="left:685px;top:1040px" width="29" height="29" viewBox="0 0 29 29"><rect x="0.7" y="5" width="24.6" height="23.3" fill="#4f8fd8" stroke="#2b3fb0" stroke-width="1.4"/><rect x="2" y="18" width="22" height="9" fill="#3a6fc0"/><ellipse cx="17.6" cy="12.5" rx="10.4" ry="12" fill="#c9955c" stroke="#1e2c7a" stroke-width="1.6"/><path d="M9,6 C12,2 22,1 26,8 C22,6 14,6.5 10,12 Z" fill="#8fb8ea"/><ellipse cx="16.5" cy="14.5" rx="5" ry="5.6" fill="#1b120c"/><ellipse cx="19.5" cy="20" rx="6" ry="3.4" fill="#d9a56a"/></svg><div class="a" style="left:732px;top:1030px;width:56px;height:46px;background:#484848"></div><div class="a" style="left:788px;top:1030px;width:4.6px;height:46px;background:#3b3b3b"></div><div class="a" style="left:789px;top:1030px;width:1px;height:46px;background:#262626"></div><svg style="left:746.7px;top:1039.6px" width="30" height="30" viewBox="0 0 30 30"><circle cx="15" cy="15" r="14.8" fill="#fff"/><path d="M15,15 L2.2,7.6 A14.8,14.8 0 0 1 27.8,7.6 Z" fill="#e53b2c"/><path d="M15,15 L27.8,7.6 A14.8,14.8 0 0 1 15,29.8 Z" fill="#f9c11c"/><path d="M15,15 L15,29.8 A14.8,14.8 0 0 1 2.2,7.6 Z" fill="#2f9e4f"/><path d="M15,8.3 H27.5 A14.8,14.8 0 0 0 15,0.2 Z" fill="#e53b2c"/><circle cx="15" cy="15" r="6.9" fill="#fff"/><circle cx="15" cy="15" r="5.4" fill="#2d7de6"/></svg><svg style="left:759.5px;top:1052.7px" width="19" height="19" viewBox="0 0 19 19"><circle cx="9.5" cy="9.5" r="9.5" fill="#262626"/><circle cx="9.5" cy="6.8" r="2.9" fill="#fff"/><path d="M3.6,14.8 V13.6 C3.6,11.3 7,10.6 9.5,10.6 C12,10.6 15.4,11.3 15.4,13.6 V14.8 Z" fill="#fff"/></svg><svg style="left:808.5px;top:1039.7px" width="31" height="30" viewBox="0 0 31 30"><path d="M1.31,20.73 L0.39,17.39 L0.24,13.93 L0.87,10.53 L2.25,7.35 L4.31,4.57 L6.94,2.32 L10.02,0.72 L13.37,-0.15 L14.58,8.46 A6.6,6.6 0 0 0 9.38,17.47 Z" fill="#2f8cf0"/><path d="M17.63,-0.15 L20.98,0.72 L24.06,2.32 L26.69,4.57 L28.75,7.35 L30.13,10.53 L30.76,13.93 L30.61,17.39 L29.69,20.73 L21.62,17.47 A6.6,6.6 0 0 0 16.42,8.46 Z" fill="#4ea6f8"/><path d="M27.56,25.42 L25.13,27.89 L22.21,29.75 L18.94,30.91 L15.50,31.30 L12.06,30.91 L8.79,29.75 L5.87,27.89 L3.44,25.42 L10.30,20.06 A6.6,6.6 0 0 0 20.70,20.06 Z" fill="#1f4de6"/><path d="M13,29 L15.5,27.2 L18,29 Z" fill="#1f1f1f"/></svg><svg style="left:870.5px;top:1039px" width="31" height="31" viewBox="0 0 31 31"><defs><radialGradient id="f1" cx="0.6" cy="0.25" r="0.9"><stop offset="0" stop-color="#ffdd3c"/><stop offset="0.5" stop-color="#ff8a1c"/><stop offset="1" stop-color="#e8274f"/></radialGradient><radialGradient id="f2" cx="0.5" cy="0.5" r="0.6"><stop offset="0" stop-color="#7e48e0"/><stop offset="1" stop-color="#5a2bb0"/></radialGradient></defs><path d="M16,1 C18,2.5 19.5,4.5 20,6.5 C22,4.5 22.5,2.5 22.5,0.8 C27.5,4.5 30.6,10 30.4,16.5 C30.2,24.5 23.5,30.8 15.5,30.8 C7.5,30.8 0.8,24.5 0.6,16.5 C0.5,12.5 1.8,9 4,6.5 C4,8 4.4,9.3 5,10.3 C6,6.5 10,5.5 12,3 C13.5,1.5 15,1 16,1 Z" fill="url(#f1)"/><circle cx="16" cy="17" r="7.6" fill="url(#f2)"/><path d="M6,12.5 C9,10.5 13,11 15,13.5 C12,13.5 10.5,15.5 11,18 C11.6,21 15,22.5 18,21.5 C15,25 8.5,24 6.5,19.5 C5.5,17 5.5,14.5 6,12.5 Z" fill="#ff9a1e"/></svg><svg style="left:932.8px;top:1044.6px" width="30.6" height="20.6" viewBox="0 0 30.6 20.6"><rect width="30.6" height="20.6" rx="5.2" fill="#f00"/><path d="M12,5.6 L20.6,10.3 L12,15 Z" fill="#fff"/></svg><svg style="left:994.5px;top:1039px" width="34" height="33" viewBox="0 0 34 33"><circle cx="10" cy="9" r="8" fill="#19a7ea"/><circle cx="20" cy="21" r="8" fill="#19a7ea"/><circle cx="14.7" cy="14.6" r="12.6" fill="#10a0e8"/><path d="M19.4,10.4 C18.6,8.4 16.6,7.6 14.5,7.6 C11.8,7.6 9.7,9 9.7,11.2 C9.7,13.4 11.6,14.2 14.6,14.9 C17.4,15.5 19.7,16.3 19.7,18.6 C19.7,20.8 17.5,22.1 14.8,22.1 C12.3,22.1 10.2,21.1 9.4,18.9" fill="none" stroke="#fff" stroke-width="2.7" stroke-linecap="round"/><circle cx="23.1" cy="23.7" r="8.6" fill="#e83c30"/></svg><div class="t" style="left:1014.2px;top:1056.75px;font-size:12.5px;color:#fff;font-weight:700;">2</div><svg style="left:1056.8px;top:1040.2px" width="28" height="27" viewBox="0 0 28 27"><defs><linearGradient id="wd" x1="0" y1="0" x2="1" y2="0.3"><stop offset="0" stop-color="#2f6fd0"/><stop offset="0.55" stop-color="#a9c3ec"/><stop offset="1" stop-color="#eef3fb"/></linearGradient></defs><path d="M1,0.5 H27 V17 L25,26.5 H1 Z" fill="url(#wd)"/><path d="M3,19.5 H24 M3,22 H23 M3,24.5 H20" stroke="#9db8e2" stroke-width="1.1"/><path d="M14,26.5 L27.6,21 L26,14.5 L13,19 Z" fill="#e9eff9" stroke="#b6c8e6" stroke-width="0.6"/></svg><div class="t" style="left:1058.4px;top:1040.50px;font-size:23px;color:#174aa6;font-weight:700;">W</div>
<svg style="left:1293.5px;top:1043.5px" width="32" height="26" viewBox="0 0 32 26"><defs><linearGradient id="w1" x1="0" y1="0" x2="0" y2="1"><stop offset="0" stop-color="#ffffff"/><stop offset="1" stop-color="#a9c6ee"/></linearGradient><linearGradient id="w2" x1="0" y1="0" x2="0" y2="1"><stop offset="0" stop-color="#ffb62e"/><stop offset="1" stop-color="#f07a1a"/></linearGradient></defs><circle cx="22.8" cy="7.6" r="7.4" fill="url(#w2)"/><path d="M7,25.5 C3,25.5 0.3,22.8 0.3,19.5 C0.3,16.2 3,13.8 6,13.8 C7,9.5 10.5,7.2 14.3,7.2 C18.6,7.2 21.7,10 22.6,13.6 C27.2,12.6 31.4,15.2 31.4,19.4 C31.4,22.9 28.6,25.5 25,25.5 Z" fill="url(#w1)"/></svg><div class="t" style="left:1334.5px;top:1046.00px;font-size:19px;color:#f0f0f0;letter-spacing:-1.600px;">30°C</div><div class="t" style="left:1381.4px;top:1046.00px;font-size:19px;color:#f0f0f0;letter-spacing:-0.333px;">Mostly cloudy</div><svg style="left:1523.5px;top:1050.5px" width="17" height="9.5" viewBox="0 0 17 9.5"><path d="M0.6,9 L8.5,1 L16.4,9" fill="none" stroke="#f2f2f2" stroke-width="1.4"/></svg><svg style="left:1554.5px;top:1045.3px" width="14" height="20" viewBox="0 0 14 20"><rect x="3.4" y="0" width="7.2" height="12.6" rx="3.2" fill="#f2f2f2"/><path d="M0.7,8.5 V10 A6.3,6.3 0 0 0 13.3,10 V8.5 M7,16.3 V19.3 M3.2,19.3 H10.8" fill="none" stroke="#f2f2f2" stroke-width="1.2"/></svg><svg style="left:1582.5px;top:1050px" width="20" height="11" viewBox="0 0 20 11"><rect x="0.7" y="0.7" width="16.8" height="9.6" fill="none" stroke="#f2f2f2" stroke-width="1.4"/><rect x="2.6" y="2.6" width="6" height="5.8" fill="#f2f2f2"/><rect x="18" y="3.3" width="1.8" height="4.4" fill="#f2f2f2"/></svg><svg style="left:1614px;top:1047.5px" width="17" height="15.5" viewBox="0 0 17 15.5" fill="none" stroke="#f2f2f2" stroke-width="1.2"><path d="M0.6,15 A14.5,14.5 0 0 1 15.5,0.8"/><path d="M4.6,15 A10.5,10.5 0 0 1 15.5,4.8"/><path d="M8.6,15 A6.5,6.5 0 0 1 15.5,8.8"/><circle cx="14.2" cy="13.8" r="1.5" fill="#f2f2f2" stroke="none"/></svg><svg style="left:1641.5px;top:1046px" width="21" height="18" viewBox="0 0 21 18" fill="none" stroke="#f2f2f2" stroke-width="1.2"><path d="M0.6,6 H3.6 L8,1.8 V16.2 L3.6,12 H0.6 Z"/><path d="M10.8,6.3 A4,4 0 0 1 10.8,11.7 M13.4,3.8 A7.5,7.5 0 0 1 13.4,14.2 M16.2,1 A11.5,11.5 0 0 1 16.2,17"/></svg><div class="t" style="left:1675px;top:1048.00px;font-size:15px;color:#f2f2f2;letter-spacing:-1.600px;">ENG</div><div class="t" style="left:1740px;top:1036.00px;font-size:15px;color:#f2f2f2;letter-spacing:-0.674px;">17:47</div><div class="t" style="left:1720.4px;top:1059.00px;font-size:15px;color:#f2f2f2;letter-spacing:-0.121px;">25-09-2024</div><svg style="left:1819px;top:1045px" width="21" height="20.5" viewBox="0 0 21 20.5"><path d="M0,0 H20 V13.5 A4.2,4.2 0 1 0 14,19.5 L11.2,19.5 L7.6,16 H0 Z" fill="#fff"/><path d="M3.6,4.3 H16.4 M3.6,8 H16.4 M3.6,11.7 H12.5" stroke="#37352c" stroke-width="1.3"/><path d="M17.6,12.3 A3.4,3.4 0 1 1 13.6,17.6 A3.6,3.6 0 0 0 17.6,12.3 Z" fill="none" stroke="#fff" stroke-width="1.1"/></svg><svg style="left:1866px;top:1042.8px" width="26" height="24.5" viewBox="0 0 26 24.5"><defs><linearGradient id="c1" x1="0" y1="0" x2="0" y2="1"><stop offset="0" stop-color="#1aa8f6"/><stop offset="0.45" stop-color="#1f8ee0"/><stop offset="0.75" stop-color="#6fbf4a"/><stop offset="1" stop-color="#f6d21a"/></linearGradient><linearGradient id="c2" x1="0" y1="0" x2="0" y2="1"><stop offset="0" stop-color="#b05af0"/><stop offset="1" stop-color="#ff5f8a"/></linearGradient></defs><path d="M6,0.3 H14.5 C17.5,0.3 19,2.5 19.6,6.3 H14.5 C13.5,6.3 12.8,7 12.5,8 L10.5,15 C10,16.8 8.6,17.6 7,17.6 H3.4 C0.8,17.6 -0.2,15.8 0.4,13.6 L3,3.4 C3.5,1.4 4.5,0.3 6,0.3 Z" fill="url(#c1)"/><path d="M14,0.3 C17.3,0.3 19,2.8 19.6,6.3 H13.2 C14.6,4.5 14.8,2 14,0.3 Z" fill="#1c4fd6"/><path d="M16.5,6.3 H22 C24.6,6.3 25.6,8 25,10.3 L23,17.6 H13.6 C15,17 15.7,16 16,15 L18,8 C18.2,7.2 17.6,6.3 16.5,6.3 Z" fill="url(#c2)"/><rect x="6.5" y="17.3" width="18.8" height="7" rx="1.6" fill="#fccd10"/></svg><div class="t" style="left:1874.2px;top:1061.25px;font-size:6.5px;color:#111;font-weight:700;letter-spacing:0.685px;">PRE</div><div class="a" style="left:1914px;top:1030px;width:1px;height:46px;background:#8c8a80"></div>
</div></div>
</body>
</html>
